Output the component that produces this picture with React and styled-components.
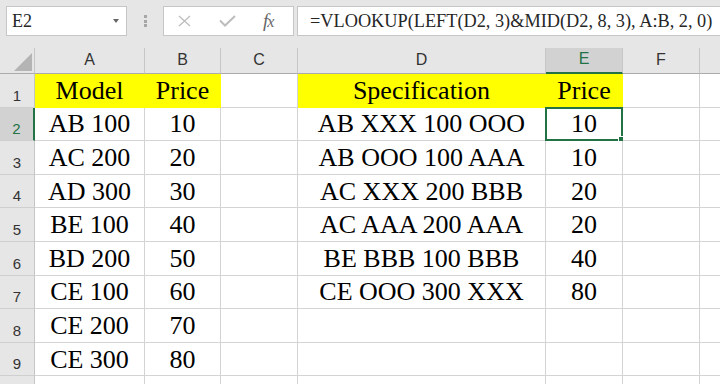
import React from "react";
import styled, { createGlobalStyle } from "styled-components";

const GlobalStyle = createGlobalStyle`
  html, body {
    margin: 0;
    padding: 0;
    background: #fff;
    overflow: hidden;
  }
  body {
    width: 720px;
    height: 384px;
  }
`;

const GREEN = "#217346";
const GRID = "#d4d4d4";

const Page = styled.div`
  width: 720px;
  height: 384px;
  overflow: hidden;
`;

const TopBar = styled.div`
  height: 48px;
  box-sizing: border-box;
  padding: 6px 0 0 6px;
  background: #e6e6e6;
  display: flex;
  align-items: flex-start;
`;

const NameBox = styled.div`
  width: 121px;
  height: 30px;
  box-sizing: border-box;
  border: 1px solid #c6c6c6;
  background: #fff;
  display: flex;
  align-items: center;
  justify-content: space-between;
  padding: 0 7px 0 5px;
  font-family: "Liberation Serif", "Times New Roman", serif;
  font-size: 18px;
  color: #262626;
`;

const Arrow = styled.span`
  width: 0;
  height: 0;
  border-left: 3.5px solid transparent;
  border-right: 3.5px solid transparent;
  border-top: 4px solid #666;
`;

const Grip = styled.div`
  width: 36px;
  height: 30px;
  display: flex;
  flex-direction: column;
  align-items: center;
  justify-content: center;
  gap: 1.5px;

  span {
    width: 3px;
    height: 3px;
    background: #a6a6a6;
  }
`;

const FxBox = styled.div`
  width: 131px;
  height: 30px;
  box-sizing: border-box;
  border: 1px solid #c6c6c6;
  background: #fff;
  display: flex;
  align-items: center;
  padding-left: 13px;
  gap: 27px;
`;

const FxLabel = styled.span`
  font-family: "Liberation Serif", "Times New Roman", serif;
  font-style: italic;
  font-size: 19px;
  color: #666;
  letter-spacing: -1px;

  small {
    font-size: 16px;
  }
`;

const FormulaBox = styled.div`
  flex: 1;
  height: 30px;
  margin-left: 3px;
  box-sizing: border-box;
  border: 1px solid #c6c6c6;
  border-right: none;
  background: #fff;
  display: flex;
  align-items: center;
  padding-left: 12px;
  font-family: "Liberation Serif", "Times New Roman", serif;
  font-size: 18.3px;
  color: #262626;
  white-space: nowrap;
`;

const Sheet = styled.div`
  display: grid;
  grid-template-columns: 35px 110px 76px 77px 248px 77px 77px 77px;
  grid-template-rows: 26px repeat(10, 33.6px);
  width: 720px;
  overflow: hidden;
`;

const Corner = styled.div`
  background: #e6e6e6;
  border-right: 1px solid #c6c6c6;
  border-bottom: 1px solid #ababab;
  display: flex;
  align-items: flex-end;
  justify-content: flex-end;
  padding: 0 2px 2px 0;
`;

const ColHead = styled.div`
  box-sizing: border-box;
  background: ${(p) => (p.$active ? "#d2d2d2" : "#e6e6e6")};
  border-right: 1px solid #c6c6c6;
  border-bottom: ${(p) => (p.$active ? `2px solid ${GREEN}` : "1px solid #ababab")};
  color: ${(p) => (p.$active ? GREEN : "#333")};
  font-family: "Liberation Sans", Arial, sans-serif;
  font-size: 16px;
  display: flex;
  align-items: center;
  justify-content: center;
  padding-bottom: 2px;
`;

const RowHead = styled.div`
  box-sizing: border-box;
  background: ${(p) => (p.$active ? "#d2d2d2" : "#e6e6e6")};
  border-right: ${(p) => (p.$active ? `2px solid ${GREEN}` : "1px solid #c6c6c6")};
  border-bottom: 1px solid #cfcfcf;
  color: ${(p) => (p.$active ? GREEN : "#333")};
  font-family: "Liberation Sans", Arial, sans-serif;
  font-size: 15px;
  display: flex;
  align-items: flex-end;
  justify-content: center;
  padding-bottom: 3px;
`;

const Cell = styled.div`
  position: relative;
  box-sizing: border-box;
  background: ${(p) => p.$fill || "#fff"};
  border-right: 1px solid ${(p) => p.$fill || GRID};
  border-bottom: 1px solid ${(p) => p.$fill || GRID};
  font-family: "Liberation Serif", "Times New Roman", serif;
  font-size: 26px;
  color: #000;
  display: flex;
  align-items: center;
  justify-content: center;
  padding-top: 1px;
  white-space: nowrap;
`;

const Selection = styled.div`
  position: absolute;
  top: -1px;
  left: -1px;
  right: -1px;
  bottom: -1px;
  border: 2px solid ${GREEN};
  pointer-events: none;

  &::after {
    content: "";
    position: absolute;
    right: -4px;
    bottom: -4px;
    width: 5px;
    height: 5px;
    background: ${GREEN};
    border: 1px solid #fff;
  }
`;

// G sits past the window edge, so only its strip shows
const columns = ["A", "B", "C", "D", "E", "F", "G"];
const visibleCols = ["A", "B", "C", "D", "E", "F"];

const rows = [
  ["Model", "Price", "", "Specification", "Price"],
  ["AB 100", "10", "", "AB XXX 100 OOO", "10"],
  ["AC 200", "20", "", "AB OOO 100 AAA", "10"],
  ["AD 300", "30", "", "AC XXX 200 BBB", "20"],
  ["BE 100", "40", "", "AC AAA 200 AAA", "20"],
  ["BD 200", "50", "", "BE BBB 100 BBB", "40"],
  ["CE 100", "60", "", "CE OOO 300 XXX", "80"],
  ["CE 200", "70"],
  ["CE 300", "80"],
  [],
];

const yellowCells = ["A1", "B1", "D1", "E1"];
const selected = { col: "E", row: 2 };

const CrossIcon = () => (
  <svg width="15" height="12" viewBox="0 0 15 12">
    <path d="M2 1 L13 11 M13 1 L2 11" stroke="#bdbdbd" strokeWidth="1.3" fill="none" />
  </svg>
);

const CheckIcon = () => (
  <svg width="17" height="12" viewBox="0 0 17 12">
    <path d="M1 5.5 L6 10.5 L16 1" stroke="#bdbdbd" strokeWidth="2" fill="none" />
  </svg>
);

const App = () => {
  return (
    <Page>
      <GlobalStyle />
      <TopBar>
        <NameBox>
          E2
          <Arrow />
        </NameBox>
        <Grip>
          <span />
          <span />
          <span />
        </Grip>
        <FxBox>
          <CrossIcon />
          <CheckIcon />
          <FxLabel>
            f<small>x</small>
          </FxLabel>
        </FxBox>
        <FormulaBox>=VLOOKUP(LEFT(D2, 3)&amp;MID(D2, 8, 3), A:B, 2, 0)</FormulaBox>
      </TopBar>

      <Sheet>
        <Corner>
          <svg width="18" height="18" viewBox="0 0 18 18">
            <polygon points="18,0 18,18 0,18" fill="#b4b4b4" />
          </svg>
        </Corner>
        {columns.map((c) => (
          <ColHead key={c} $active={c === selected.col}>
            {visibleCols.includes(c) ? c : ""}
          </ColHead>
        ))}

        {rows.map((row, i) => {
          const n = i + 1;
          return (
            <React.Fragment key={n}>
              <RowHead $active={n === selected.row}>{n < rows.length ? n : ""}</RowHead>
              {columns.map((c, j) => {
                const id = `${c}${n}`;
                const isSel = c === selected.col && n === selected.row;
                return (
                  <Cell key={id} $fill={yellowCells.includes(id) ? "#ffff00" : undefined}>
                    {row[j] || ""}
                    {isSel && <Selection />}
                  </Cell>
                );
              })}
            </React.Fragment>
          );
        })}
      </Sheet>
    </Page>
  );
};

export default App;
